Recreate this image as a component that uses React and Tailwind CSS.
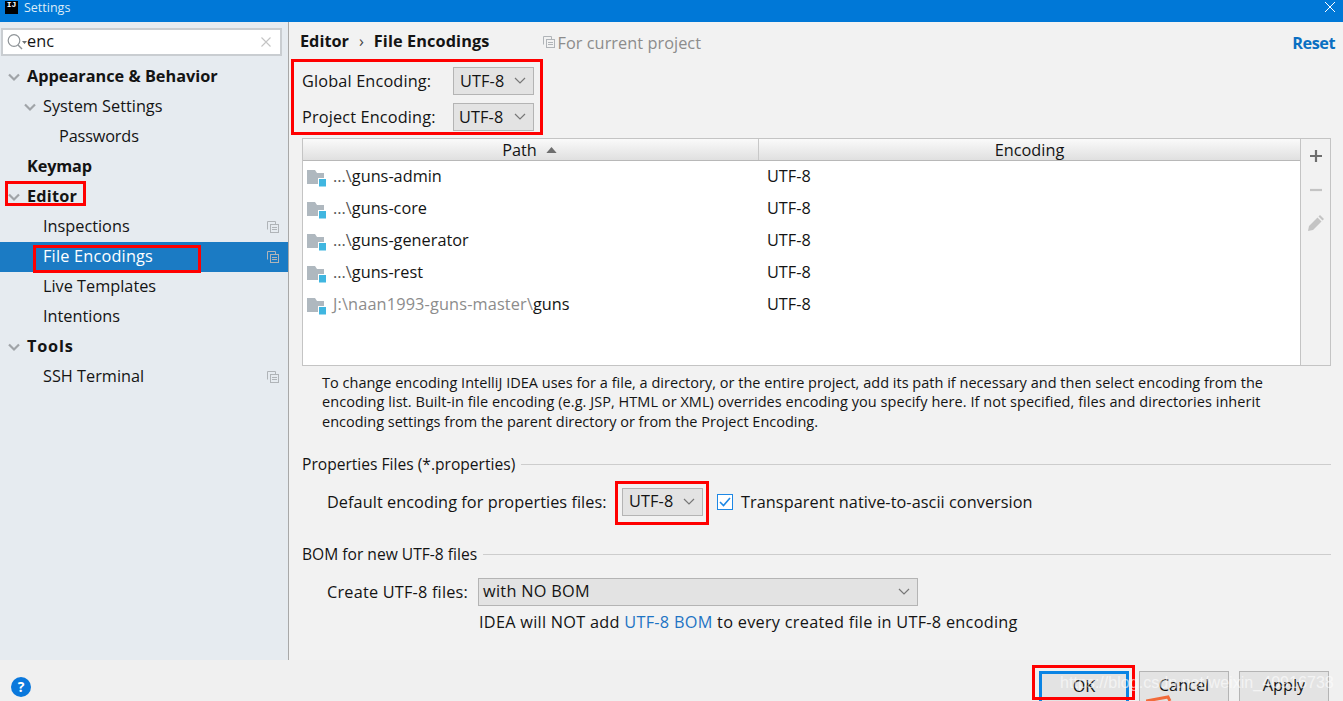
import React from "react";

function Chevron({ className = "" }) {
  return (
    <svg width="14" height="14" viewBox="0 0 14 14" className={className}>
      <path d="M2 4.5 L7 9.5 L12 4.5" fill="none" stroke="#a0a4a8" strokeWidth="2.2" />
    </svg>
  );
}

function Copy({ className = "" }) {
  return (
    <svg width="12" height="12" viewBox="0 0 12 12" className={className}>
      <path d="M0.5 8.5V0.5H8.5V3" fill="none" stroke="#b0b4b8" />
      <rect x="3.5" y="3.5" width="8" height="8" fill="none" stroke="#b0b4b8" />
      <path d="M5 6.5H10M5 8.5H10" stroke="#b0b4b8" />
    </svg>
  );
}

function TreeRow({ label, bold, indent, chevron, selected, copy, tracking = "" }) {
  return (
    <div className={`relative flex h-[30px] items-center ${selected ? "bg-[#1b7bc4] text-white" : "text-[#141414]"} ${indent}`}>
      {chevron && <Chevron className="absolute -ml-[20px]" />}
      <span className={`pb-[2px] ${bold ? "font-bold" : ""} ${tracking}`}>{label}</span>
      {copy && <Copy className="absolute right-[9px]" />}
    </div>
  );
}

function Combo({ width, label = "UTF-8", pad = "pl-[6px]", tracking = "tracking-[0.1px]" }) {
  return (
    <div className={`flex h-[28px] ${width} items-center justify-between border border-[#b4b4b4] bg-[#e3e3e3] ${pad} pr-[7px] text-[#141414]`}>
      <span className={`pb-[1px] ${tracking}`}>{label}</span>
      <svg width="12" height="8" viewBox="0 0 12 8">
        <path d="M1 1 L6 6 L11 1" fill="none" stroke="#777" strokeWidth="1.2" />
      </svg>
    </div>
  );
}

function Folder() {
  return (
    <svg width="20" height="18" viewBox="0 0 20 18" className="mt-[6px] shrink-0">
      <path d="M0 0H8L10 3H17V14H0Z" fill="#afb8bf" />
      <rect x="11.5" y="8.5" width="8" height="8.5" fill="#40b6e0" stroke="#fff" strokeWidth="1" />
    </svg>
  );
}

function PathRow({ prefix, name, gray }) {
  return (
    <div className="flex h-[32px] items-center">
      <div className="flex w-[456px] items-center pl-[4px]">
        <Folder />
        <span className="ml-[6px]">
          <span className={gray ? "tracking-[0.15px] text-[#8c8c8c]" : "text-[#555]"}>{prefix}</span>
          <span className="text-[#141414]">{name}</span>
        </span>
      </div>
      <span className="pl-[8px] text-[#141414]">UTF-8</span>
    </div>
  );
}

function Section({ title }) {
  return (
    <div className="flex h-[20px] items-center text-[#141414]">
      <span className="text-[15.6px]">{title}</span>
      <div className="ml-[6px] mt-[1px] h-px flex-1 bg-[#cdcdcd]" />
    </div>
  );
}

function Button({ label, className }) {
  return (
    <div className={`flex h-[30px] items-center justify-center pb-[3px] text-[#141414] ${className}`}>{label}</div>
  );
}

function Mark({ className }) {
  return <div className={`pointer-events-none absolute border-[3px] border-[#ff0000] ${className}`} />;
}

export default function App() {
  return (
    <div className="relative flex h-[701px] w-[1343px] flex-col overflow-hidden bg-[#f2f2f2] font-['Open_Sans','Noto_Sans',sans-serif] text-[16.3px] leading-[20px]">
      {/* title bar */}
      <div className="flex h-[22px] shrink-0 items-center justify-between bg-[#0078d7] text-white">
        <div className="flex items-center pl-[5px]">
          <div className="-mt-[8px] flex h-[13px] w-[13px] items-start justify-center bg-black font-['Liberation_Mono',monospace] text-[8px] font-bold leading-[8px] text-white">IJ</div>
          <span className="ml-[6px] -mt-[7px] text-[12.5px] text-[#dcecf8]">Settings</span>
        </div>
        <svg width="12" height="12" viewBox="0 0 12 12" className="mr-[7px] -mt-[8px]">
          <path d="M1 1L11 11M11 1L1 11" stroke="#fff" strokeWidth="1" />
        </svg>
      </div>

      <div className="flex min-h-0 flex-1">
        {/* sidebar */}
        <div className="w-[289px] shrink-0 border-r border-r-[#a8a8a8] bg-[#e6ebf0]">
          <div className="ml-[1px] mt-[6px] flex h-[28px] w-[281px] items-center border-2 border-[#c9cdd1] bg-white pl-[4px] pr-[9px] text-[#141414]">
            <svg width="20" height="18" viewBox="0 0 20 18" className="shrink-0">
              <circle cx="7" cy="7.5" r="5.8" fill="none" stroke="#8f9498" strokeWidth="1.2" />
              <path d="M11 12L15 16" stroke="#8f9498" strokeWidth="1.4" />
              <path d="M15 8H20L17.5 11Z" fill="#6e7276" />
            </svg>
            <span className="flex-1 pb-[2px]">enc</span>
            <svg width="10" height="10" viewBox="0 0 10 10">
              <path d="M0.5 0.5L9.5 9.5M9.5 0.5L0.5 9.5" stroke="#c4c4c4" strokeWidth="1.1" />
            </svg>
          </div>
          <div className="mt-[6px]">
            <TreeRow label="Appearance & Behavior" bold chevron indent="pl-[27px]" />
            <TreeRow label="System Settings" chevron indent="pl-[43px]" />
            <TreeRow label="Passwords" indent="pl-[59px]" tracking="-tracking-[0.15px]" />
            <TreeRow label="Keymap" bold indent="pl-[27px]" tracking="-tracking-[0.15px]" />
            <TreeRow label="Editor" bold chevron indent="pl-[27px]" tracking="tracking-[0.2px]" />
            <TreeRow label="Inspections" copy indent="pl-[43px]" />
            <TreeRow label="File Encodings" copy selected indent="pl-[43px]" tracking="tracking-[0.2px]" />
            <TreeRow label="Live Templates" indent="pl-[43px]" />
            <TreeRow label="Intentions" indent="pl-[43px]" />
            <TreeRow label="Tools" bold chevron indent="pl-[27px]" tracking="tracking-[0.8px]" />
            <TreeRow label="SSH Terminal" copy indent="pl-[43px]" />
          </div>
        </div>

        {/* content */}
        <div className="min-w-0 flex-1 pr-[12px]">
          <div className="flex h-[38px] items-center pb-[1px] pl-[11px]">
            <span className="font-bold text-[#141414]">Editor</span>
            <span className="mx-[10px] text-[#444]">›</span>
            <span className="font-bold tracking-[0.1px] text-[#141414]">File Encodings</span>
            <Copy className="ml-[54px] mt-[3px]" />
            <span className="ml-[2px] mt-[5px] tracking-[0.05px] text-[#8c8c8c]">For current project</span>
            <span className="-mr-[4px] ml-auto mt-[4px] font-bold -tracking-[0.5px] text-[#0a6fc2]">Reset</span>
          </div>

          <div className="ml-[13px] mt-[7px] flex h-[28px] items-center text-[#141414]">
            <span className="w-[151px] tracking-[0.15px]">Global Encoding:</span>
            <Combo width="w-[81px]" />
          </div>
          <div className="ml-[13px] mt-[8px] flex h-[28px] items-center text-[#141414]">
            <span className="w-[151px] tracking-[0.15px]">Project Encoding:</span>
            <Combo width="w-[81px]" pad="pl-[5px]" />
          </div>

          {/* table */}
          <div className="ml-[13px] mt-[7px] flex h-[228px] border border-[#c4c4c4] bg-white">
            <div className="min-w-0 flex-1">
              <div className="flex h-[22px] items-center border-b border-b-[#b8b8b8] bg-gradient-to-b from-[#fafafa] to-[#e0e0e0] text-[#141414]">
                <div className="flex h-full w-[456px] items-center justify-center border-r border-r-[#c8c8c8] pr-[2px]">
                  Path
                  <svg width="11" height="6" viewBox="0 0 12 7" className="ml-[9px]"><path d="M0 7L6 0L12 7Z" fill="#6e6e6e" /></svg>
                </div>
                <div className="flex-1 text-center">Encoding</div>
              </div>
              <div className="-mt-[1px]">
                <PathRow prefix="...\" name="guns-admin" />
                <PathRow prefix="...\" name="guns-core" />
                <PathRow prefix="...\" name="guns-generator" />
                <PathRow prefix="...\" name="guns-rest" />
                <PathRow prefix="J:\naan1993-guns-master\" name="guns" gray />
              </div>
            </div>
            <div className="flex w-[30px] flex-col items-center border-l border-l-[#c4c4c4] bg-[#f2f2f2] pt-[10px]">
              <svg width="14" height="14" viewBox="0 0 14 14"><path d="M7 1V13M1 7H13" stroke="#6e6e6e" strokeWidth="2.2" /></svg>
              <svg width="14" height="14" viewBox="0 0 14 14" className="mt-[20px]"><path d="M1 7H13" stroke="#c4c4c4" strokeWidth="2.2" /></svg>
              <svg width="18" height="18" viewBox="0 0 18 18" className="mt-[17px]"><path d="M1 17L2 12L10.5 3.5L14.5 7.5L6 16ZM11.5 2.5L13 1L17 5L15.5 6.5Z" fill="#c4c4c4" /></svg>
            </div>
          </div>

          <div className="ml-[33px] mt-[7px] whitespace-nowrap text-[14.5px] leading-[19.25px] text-[#141414]">
            <p className="tracking-[0.015px]">To change encoding IntelliJ IDEA uses for a file, a directory, or the entire project, add its path if necessary and then select encoding from the</p>
            <p className="tracking-[0.05px]">encoding list. Built-in file encoding (e.g. JSP, HTML or XML) overrides encoding you specify here. If not specified, files and directories inherit</p>
            <p>encoding settings from the parent directory or from the Project Encoding.</p>
          </div>

          <div className="ml-[13px] mt-[23px]"><Section title="Properties Files (*.properties)" /></div>
          <div className="ml-[38px] mt-[14px] flex h-[28px] items-center text-[#141414]">
            <span className="w-[295px] tracking-[0.05px]">Default encoding for properties files:</span>
            <Combo width="w-[81px]" />
            <div className="ml-[14px] flex h-[16px] w-[16px] items-center justify-center border border-[#1e88e5] bg-white">
              <svg width="12" height="10" viewBox="0 0 12 10"><path d="M1 5L4.5 8.5L11 1" fill="none" stroke="#1e88e5" strokeWidth="1.6" /></svg>
            </div>
            <span className="ml-[8px] tracking-[0.05px]">Transparent native-to-ascii conversion</span>
          </div>

          <div className="ml-[13px] mt-[28px]"><Section title="BOM for new UTF-8 files" /></div>
          <div className="ml-[38px] mt-[14px] flex h-[28px] items-center text-[#141414]">
            <span className="w-[151px] tracking-[0.2px]">Create UTF-8 files:</span>
            <Combo width="w-[440px]" label="with NO BOM" pad="pl-[4px]" tracking="tracking-[0.3px]" />
          </div>
          <div className="ml-[190px] mt-[6px] h-[20px] tracking-[0.27px] text-[#141414]">
            IDEA will NOT add <span className="text-[#1e74c4]">UTF-8 BOM</span> to every created file in UTF-8 encoding
          </div>
        </div>
      </div>

      {/* footer */}
      <div className="flex h-[41px] shrink-0 items-end justify-between bg-[#f0f0f0]">
        <div className="mb-[4px] ml-[11px] flex h-[20px] w-[20px] items-center justify-center rounded-full bg-[#0a78dc] text-[14px] font-bold text-white">?</div>
        <div className="mr-[14px] flex gap-[10px]">
          <Button label="OK" className="w-[90px] border-[3px] border-b-0 border-[#0a84e4] bg-[#e3e3e3]" />
          <Button label="Cancel" className="w-[90px] border border-b-0 border-[#b4b4b4] bg-[#e3e3e3]" />
          <Button label="Apply" className="w-[90px] border border-b-0 border-[#b4b4b4] bg-[#e3e3e3]" />
        </div>
      </div>

      {/* annotation overlays */}
      <Mark className="left-[291px] top-[59px] h-[76px] w-[252px]" />
      <Mark className="left-[5px] top-[181px] h-[25px] w-[81px]" />
      <Mark className="left-[33px] top-[245px] h-[28px] w-[168px]" />
      <Mark className="left-[615px] top-[481px] h-[44px] w-[94px]" />
      <Mark className="left-[1032px] top-[665px] h-[35px] w-[103px]" />
      <div className="pointer-events-none absolute left-[1060px] top-[671px] whitespace-nowrap font-['Liberation_Sans',sans-serif] text-[16.1px] leading-[22px] text-white/60">
        https://blog.csdn.net/weixin_40916738
      </div>
      <svg width="26" height="6" viewBox="0 0 26 6" className="pointer-events-none absolute left-[1146px] top-[695px]">
        <path d="M0 6L22 2L24 6" fill="none" stroke="#f26b3a" strokeWidth="3" />
      </svg>
    </div>
  );
}
